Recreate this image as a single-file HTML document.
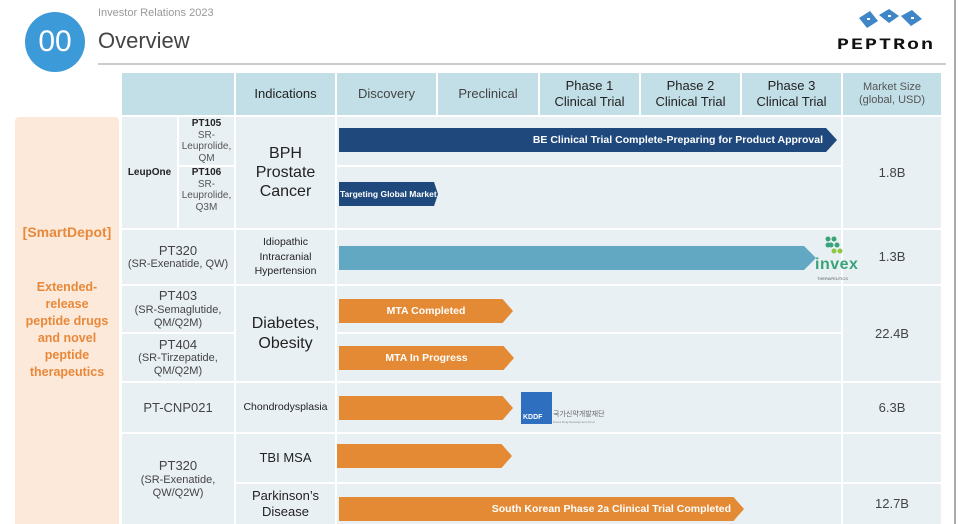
<!DOCTYPE html>
<html><head><meta charset="utf-8"><style>
*{margin:0;padding:0;box-sizing:border-box}
body{width:960px;height:524px;overflow:hidden;background:#fff;font-family:"Liberation Sans","Noto Sans CJK KR",sans-serif;position:relative;color:#222}
.a{position:absolute}
.c{position:absolute;display:flex;align-items:center;justify-content:center;text-align:center;flex-direction:column;line-height:1.2}
.h{background:#c2dfe8;font-size:13px;color:#222}
.b{background:#e9f0f4}
.bar{position:absolute;height:24px;color:#fff;font-weight:bold;font-size:10.5px;display:flex;align-items:center;white-space:nowrap;overflow:hidden}
.or{background:#e48a35}
</style></head><body>
<div class="a" style="left:25px;top:12px;width:60px;height:60px;border-radius:50%;background:#3d9ad8;color:#fff;font-size:30px;display:flex;align-items:center;justify-content:center">00</div>
<div class="a" style="left:98px;top:7px;font-size:11px;color:#999">Investor Relations 2023</div>
<div class="a" style="left:98px;top:28px;font-size:22px;color:#444">Overview</div>
<div class="a" style="left:98px;top:63px;width:848px;height:2px;background:#ccc"></div>
<div class="a" style="left:954px;top:0;width:2px;height:524px;background:#aaa"></div>
<svg class="a" style="left:857px;top:6px" width="70" height="26" viewBox="0 0 70 26">
<g fill="#3e86c8"><polygon points="2,12 13,5 21,15 10,22"/><polygon points="22,9 32,3 42,10 32,17"/><polygon points="44,10 55,4 65,13 54,20"/></g>
<g fill="#fff"><rect x="10" y="12" width="3" height="2"/><rect x="31" y="9" width="3" height="2"/><rect x="54" y="11" width="3" height="2"/></g></svg>
<div class="a" style="left:837px;top:36px;width:108px;font-size:20px;font-weight:bold;letter-spacing:2px;color:#111;font-family:'Liberation Mono',monospace;transform:scaleY(0.8);transform-origin:left top">PEPTRon</div>

<!-- header -->
<div class="c h" style="left:122px;top:73px;width:112px;height:42px"></div>
<div class="c h" style="left:236px;top:73px;width:99px;height:42px">Indications</div>
<div class="c h" style="left:337px;top:73px;width:99px;height:42px;color:#444">Discovery</div>
<div class="c h" style="left:438px;top:73px;width:100px;height:42px;color:#444">Preclinical</div>
<div class="c h" style="left:540px;top:73px;width:99px;height:42px">Phase 1<br>Clinical Trial</div>
<div class="c h" style="left:641px;top:73px;width:99px;height:42px">Phase 2<br>Clinical Trial</div>
<div class="c h" style="left:742px;top:73px;width:99px;height:42px">Phase 3<br>Clinical Trial</div>
<div class="c h" style="left:843px;top:73px;width:98px;height:42px;font-size:11px;color:#555">Market Size<br>(global, USD)</div>

<!-- left panel -->
<div class="c" style="left:15px;top:117px;width:104px;height:407px;background:#fde9d9;border-radius:4px 4px 0 0;color:#e8883a;font-weight:bold;justify-content:flex-start">
<div style="margin-top:107px;font-size:14px">[SmartDepot]</div>
<div style="margin-top:38px;font-size:12.5px;line-height:17px">Extended-<br>release<br>peptide drugs<br>and novel<br>peptide<br>therapeutics</div></div>

<!-- body cells -->
<div class="c b" style="left:122px;top:117px;width:55px;height:111px;font-size:10px;font-weight:bold">LeupOne</div>
<div class="c b" style="left:179px;top:117px;width:55px;height:48px;font-size:10px;color:#555;line-height:1.15"><b style="color:#222">PT105</b>SR-<br>Leuprolide,<br>QM</div>
<div class="c b" style="left:179px;top:167px;width:55px;height:61px;font-size:10px;color:#555;line-height:1.15;justify-content:flex-start"><b style="color:#222">PT106</b>SR-<br>Leuprolide,<br>Q3M</div>
<div class="c b" style="left:236px;top:117px;width:99px;height:111px;font-size:16px">BPH<br>Prostate<br>Cancer</div>
<div class="a b" style="left:337px;top:117px;width:504px;height:48px"></div>
<div class="a b" style="left:337px;top:167px;width:504px;height:61px"></div>
<div class="c b" style="left:843px;top:117px;width:98px;height:111px;font-size:13px;color:#444">1.8B</div>

<div class="c b" style="left:122px;top:230px;width:112px;height:54px;font-size:13px;color:#444">PT320<span style="font-size:11px">(SR-Exenatide, QW)</span></div>
<div class="c b" style="left:236px;top:230px;width:99px;height:54px;font-size:10.5px;line-height:1.4">Idiopathic<br>Intracranial<br>Hypertension</div>
<div class="a b" style="left:337px;top:230px;width:504px;height:54px"></div>
<div class="c b" style="left:843px;top:230px;width:98px;height:54px;font-size:13px;color:#444">1.3B</div>

<div class="c b" style="left:122px;top:286px;width:112px;height:46px;font-size:13px;color:#444">PT403<span style="font-size:11px">(SR-Semaglutide,<br>QM/Q2M)</span></div>
<div class="c b" style="left:122px;top:334px;width:112px;height:47px;font-size:13px;color:#444">PT404<span style="font-size:11px">(SR-Tirzepatide,<br>QM/Q2M)</span></div>
<div class="c b" style="left:236px;top:286px;width:99px;height:95px;font-size:16px">Diabetes,<br>Obesity</div>
<div class="a b" style="left:337px;top:286px;width:504px;height:46px"></div>
<div class="a b" style="left:337px;top:334px;width:504px;height:47px"></div>
<div class="c b" style="left:843px;top:286px;width:98px;height:95px;font-size:13px;color:#444">22.4B</div>

<div class="c b" style="left:122px;top:383px;width:112px;height:49px;font-size:13px;color:#444">PT-CNP021</div>
<div class="c b" style="left:236px;top:383px;width:99px;height:49px;font-size:10.5px">Chondrodysplasia</div>
<div class="a b" style="left:337px;top:383px;width:504px;height:49px"></div>
<div class="c b" style="left:843px;top:383px;width:98px;height:49px;font-size:13px;color:#444">6.3B</div>

<div class="c b" style="left:122px;top:434px;width:112px;height:90px;font-size:13px;color:#444">PT320<span style="font-size:11px">(SR-Exenatide,<br>QW/Q2W)</span></div>
<div class="c b" style="left:236px;top:434px;width:99px;height:48px;font-size:13px">TBI MSA</div>
<div class="c b" style="left:236px;top:484px;width:99px;height:40px;font-size:13px">Parkinson’s<br>Disease</div>
<div class="a b" style="left:337px;top:434px;width:504px;height:48px"></div>
<div class="a b" style="left:337px;top:484px;width:504px;height:40px"></div>
<div class="a b" style="left:843px;top:434px;width:98px;height:48px"></div>
<div class="c b" style="left:843px;top:484px;width:98px;height:40px;font-size:13px;color:#444">12.7B</div>

<!-- bars -->
<div class="bar" style="left:339px;top:128px;width:498px;background:#1f497d;justify-content:flex-end;padding-right:14px;clip-path:polygon(0 0,97.8% 0,100% 50%,97.8% 100%,0 100%)">BE Clinical Trial Complete-Preparing for Product Approval</div>
<div class="bar" style="left:339px;top:182px;width:99px;background:#1f497d;font-size:8.5px;padding-left:1px;clip-path:polygon(0 0,96% 0,100% 50%,96% 100%,0 100%)">Targeting Global Market</div>
<div class="bar" style="left:339px;top:246px;width:477px;background:#62a8c2;clip-path:polygon(0 0,97.5% 0,100% 50%,97.5% 100%,0 100%)"></div>
<div class="bar or" style="left:339px;top:299px;width:174px;justify-content:center;clip-path:polygon(0 0,94% 0,100% 50%,94% 100%,0 100%)">MTA Completed</div>
<div class="bar or" style="left:339px;top:346px;width:175px;justify-content:center;clip-path:polygon(0 0,94% 0,100% 50%,94% 100%,0 100%)">MTA In Progress</div>
<div class="bar or" style="left:339px;top:396px;width:174px;clip-path:polygon(0 0,94% 0,100% 50%,94% 100%,0 100%)"></div>
<div class="bar or" style="left:337px;top:444px;width:175px;clip-path:polygon(0 0,94% 0,100% 50%,94% 100%,0 100%)"></div>
<div class="bar or" style="left:339px;top:497px;width:405px;justify-content:flex-end;padding-right:13px;clip-path:polygon(0 0,97.4% 0,100% 50%,97.4% 100%,0 100%)">South Korean Phase 2a Clinical Trial Completed</div>

<!-- invex logo -->
<svg class="a" style="left:824px;top:236px" width="20" height="22"><g fill="#3aa37a"><circle cx="4" cy="3" r="2.5"/><circle cx="10" cy="3" r="2.5"/><circle cx="7" cy="9" r="2.5"/><circle cx="13" cy="9" r="2.5"/><circle cx="16" cy="15" r="2.5" fill="#8dc63f"/><circle cx="10" cy="15" r="2.5" fill="#8dc63f"/><circle cx="4" cy="9" r="2.5"/></g></svg>
<div class="a" style="left:815px;top:256px;font-size:16px;color:#3aa37a;font-weight:bold;letter-spacing:0.5px">invex</div>
<div class="a" style="left:817px;top:276px;font-size:4px;color:#555">THERAPEUTICS</div>
<!-- KDDF logo -->
<div class="a" style="left:521px;top:392px;width:31px;height:32px;background:#2f6fc0;color:#fff;font-size:7px;font-weight:bold;display:flex;align-items:flex-end;padding:0 0 3px 2px">KDDF</div>
<div class="a" style="left:553px;top:409px;font-size:7px;color:#666">국가신약개발재단</div>
<div class="a" style="left:553px;top:420px;font-size:3px;color:#888">Korea Drug Development Fund</div>
</body></html>
